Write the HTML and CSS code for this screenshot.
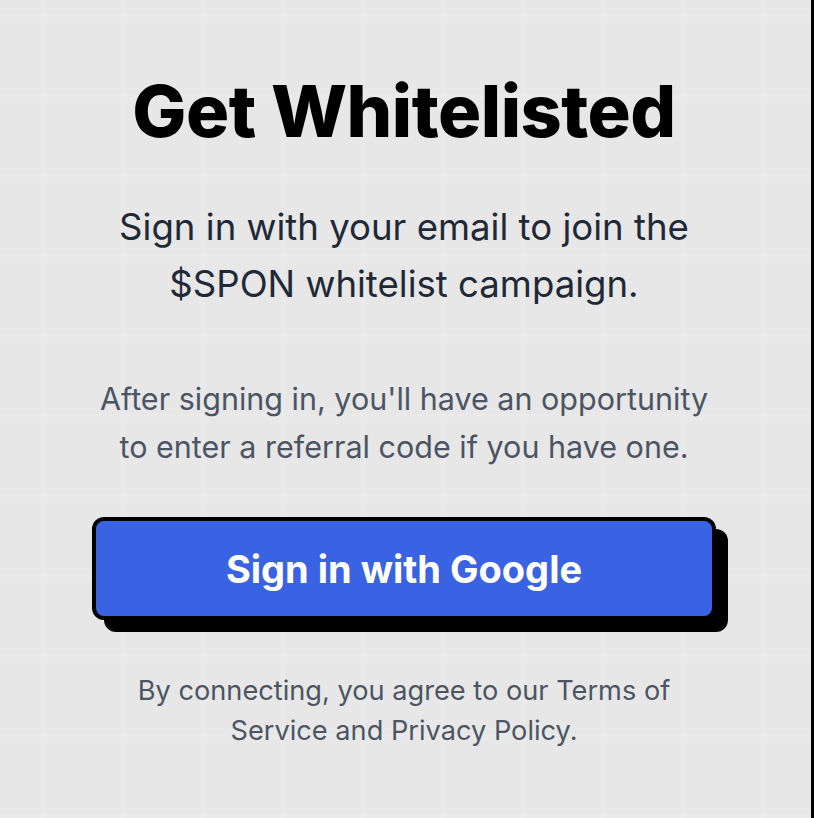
FILE: index.html
```html
<!DOCTYPE html>
<html lang="en">
<head>
<meta charset="utf-8">
<title>Get Whitelisted</title>
<link rel="stylesheet" href="styles.css">
</head>
<body>
<div class="page">
  <main class="card">
    <h1 class="title">Get Whitelisted</h1>
    <p class="lead">Sign in with your email to join the $SPON whitelist campaign.</p>
    <p class="note">After signing in, you'll have an opportunity to enter a referral code if you have one.</p>
    <button class="google-btn" type="button">Sign in with Google</button>
    <p class="legal">By connecting, you agree to our Terms of Service and Privacy Policy.</p>
  </main>
</div>
</body>
</html>
```

FILE: styles.css
```css
* { box-sizing: border-box; }
html, body { margin: 0; padding: 0; }
body {
  font-family: Inter, "Noto Sans", sans-serif;
  background: #000;
}
.page {
  width: 811px;
  min-height: 818px;
  padding-right: 3px;
  background-color: #e7e7e7;
  background-image:
    linear-gradient(90deg, rgba(255,255,255,0.1) 0 6px, transparent 6px),
    linear-gradient(0deg, rgba(255,255,255,0.1) 0 6px, transparent 6px);
  background-size: 80px 80px;
  background-position: 40px 20px;
  display: flex;
  justify-content: center;
}
.card {
  width: 624px;
  padding-top: 75px;
  display: flex;
  flex-direction: column;
  align-items: center;
  text-align: center;
}
.title {
  margin: 0;
  font-size: 72px;
  line-height: 1;
  font-weight: 800;
  letter-spacing: -0.5px;
  color: #000;
}
.lead {
  margin: 52px 0 0;
  font-size: 36.6px;
  line-height: 57px;
  color: #1f2937;
  max-width: 610px;
}
.note {
  margin: 62px 0 0;
  font-size: 30.5px;
  line-height: 48px;
  color: #4b5563;
}
.google-btn {
  margin-top: 46px;
  width: 624px;
  height: 103px;
  border: 4px solid #000;
  border-radius: 12px;
  background: #3a63e3;
  color: #fff;
  font-family: inherit;
  font-size: 38px;
  font-weight: 700;
  box-shadow: 12px 12px 0 #000;
  cursor: pointer;
}
.legal {
  margin: 51px 0 0;
  font-size: 27.2px;
  line-height: 40px;
  color: #4b5563;
  max-width: 570px;
}
```
